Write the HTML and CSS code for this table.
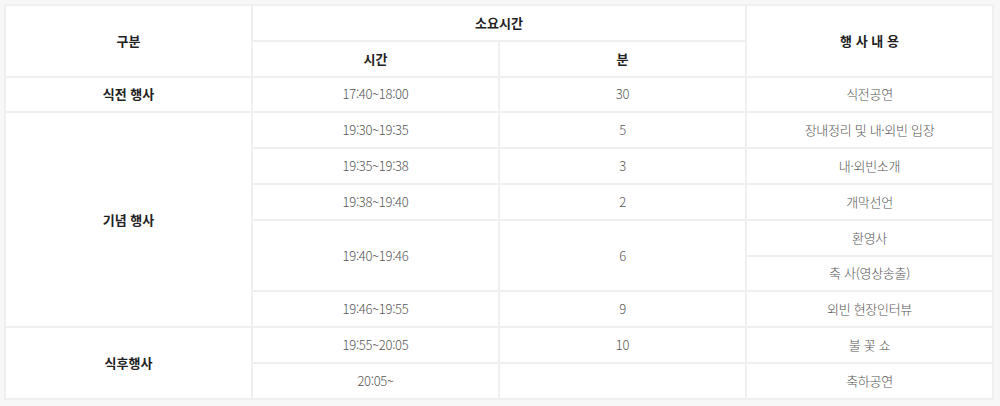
FILE: index.html
```html
<!DOCTYPE html>
<html lang="ko">
<head>
<meta charset="utf-8">
<link rel="stylesheet" href="styles.css">
</head>
<body>
<div class="wrap">
<table class="sched">
  <colgroup><col class="c"><col class="c"><col class="c"><col class="c"></colgroup>
  <thead>
    <tr><th rowspan="2">구분</th><th colspan="2">소요시간</th><th rowspan="2">행 사 내 용</th></tr>
    <tr><th>시간</th><th>분</th></tr>
  </thead>
  <tbody>
    <tr><th>식전 행사</th><td>17:40~18:00</td><td>30</td><td>식전공연</td></tr>
    <tr><th rowspan="6">기념 행사</th><td>19:30~19:35</td><td>5</td><td>장내정리 및 내·외빈 입장</td></tr>
    <tr><td>19:35~19:38</td><td>3</td><td>내·외빈소개</td></tr>
    <tr><td>19:38~19:40</td><td>2</td><td>개막선언</td></tr>
    <tr><td rowspan="2">19:40~19:46</td><td rowspan="2">6</td><td>환영사</td></tr>
    <tr><td>축 사(영상송출)</td></tr>
    <tr><td>19:46~19:55</td><td>9</td><td>외빈 현장인터뷰</td></tr>
    <tr><th rowspan="2">식후행사</th><td>19:55~20:05</td><td>10</td><td>불 꽃 쇼</td></tr>
    <tr><td>20:05~</td><td></td><td>축하공연</td></tr>
  </tbody>
</table>
</div>
</body>
</html>
```
FILE: styles.css
```css
html, body {
  margin: 0;
  padding: 0;
  background: #f7f7f7;
}
.wrap {
  padding: 4px 6px 6px 4px;
}
.sched {
  width: 990px;
  border-collapse: collapse;
  background: #fff;
  table-layout: fixed;
  font-family: "Noto Sans CJK KR", "Noto Sans", sans-serif;
  font-size: 13px;
}
.sched .c { width: 25%; }
.sched th, .sched td {
  border: 2px solid #efefef;
  text-align: center;
  vertical-align: middle;
  height: 35.8px;
  padding: 0 4px;
  line-height: 20px;
  box-sizing: border-box;
}
.sched th {
  font-weight: 700;
  color: #222;
}
.sched td {
  font-weight: 300;
  color: #555;
  letter-spacing: -0.3px;
}
```
